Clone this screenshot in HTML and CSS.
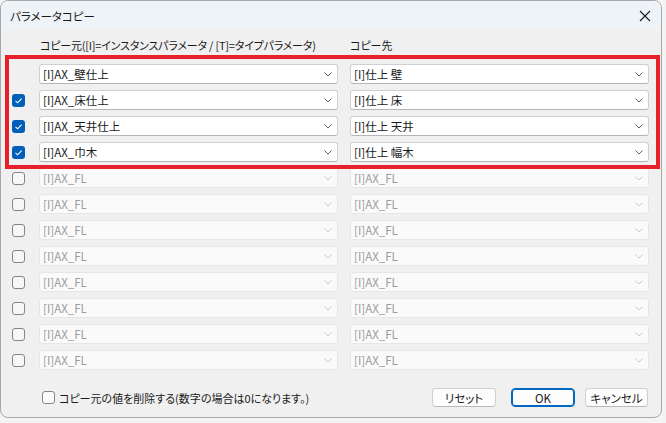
FILE: index.html
```html
<!DOCTYPE html>
<html lang="ja">
<head>
<meta charset="utf-8">
<title>パラメータコピー</title>
<link rel="stylesheet" href="styles.css">
</head>
<body>
<div class="window">
  <div class="titlebar">
    <span class="title">パラメータコピー</span>
    <svg class="close" width="12" height="12" viewBox="0 0 12 12"><path d="M1 1 L11 11 M11 1 L1 11" stroke="#1a1a1a" stroke-width="1.1" fill="none"/></svg>
  </div>
  <div class="content">
    <div class="header grid">
      <span></span>
      <span class="h-src">コピー元([I]=インスタンスパラメータ / [T]=タイプパラメータ)</span>
      <span class="h-dst">コピー先</span>
    </div>
    <div class="rows">
      <div class="row grid">
        <span></span>
        <div class="combo"><span class="val">[I]AX_壁仕上</span><svg class="chev" width="8" height="5" viewBox="0 0 8 5"><path d="M0.5 0.5 L4 4 L7.5 0.5" stroke="#606060" fill="none"/></svg></div>
        <div class="combo"><span class="val">[I]仕上 壁</span><svg class="chev" width="8" height="5" viewBox="0 0 8 5"><path d="M0.5 0.5 L4 4 L7.5 0.5" stroke="#606060" fill="none"/></svg></div>
      </div>
      <div class="row grid">
        <span class="cb checked"><svg width="13" height="13" viewBox="0 0 13 13"><path d="M3.5 6.8 L5.6 8.8 L9.6 4.6" stroke="#fff" stroke-width="1.1" fill="none"/></svg></span>
        <div class="combo"><span class="val">[I]AX_床仕上</span><svg class="chev" width="8" height="5" viewBox="0 0 8 5"><path d="M0.5 0.5 L4 4 L7.5 0.5" stroke="#606060" fill="none"/></svg></div>
        <div class="combo"><span class="val">[I]仕上 床</span><svg class="chev" width="8" height="5" viewBox="0 0 8 5"><path d="M0.5 0.5 L4 4 L7.5 0.5" stroke="#606060" fill="none"/></svg></div>
      </div>
      <div class="row grid">
        <span class="cb checked"><svg width="13" height="13" viewBox="0 0 13 13"><path d="M3.5 6.8 L5.6 8.8 L9.6 4.6" stroke="#fff" stroke-width="1.1" fill="none"/></svg></span>
        <div class="combo"><span class="val">[I]AX_天井仕上</span><svg class="chev" width="8" height="5" viewBox="0 0 8 5"><path d="M0.5 0.5 L4 4 L7.5 0.5" stroke="#606060" fill="none"/></svg></div>
        <div class="combo"><span class="val">[I]仕上 天井</span><svg class="chev" width="8" height="5" viewBox="0 0 8 5"><path d="M0.5 0.5 L4 4 L7.5 0.5" stroke="#606060" fill="none"/></svg></div>
      </div>
      <div class="row grid">
        <span class="cb checked"><svg width="13" height="13" viewBox="0 0 13 13"><path d="M3.5 6.8 L5.6 8.8 L9.6 4.6" stroke="#fff" stroke-width="1.1" fill="none"/></svg></span>
        <div class="combo"><span class="val">[I]AX_巾木</span><svg class="chev" width="8" height="5" viewBox="0 0 8 5"><path d="M0.5 0.5 L4 4 L7.5 0.5" stroke="#606060" fill="none"/></svg></div>
        <div class="combo"><span class="val">[I]仕上 幅木</span><svg class="chev" width="8" height="5" viewBox="0 0 8 5"><path d="M0.5 0.5 L4 4 L7.5 0.5" stroke="#606060" fill="none"/></svg></div>
      </div>
      <div class="row grid"><span class="cb"></span><div class="combo disabled"><span class="val">[I]AX_FL</span><svg class="chev" width="8" height="5" viewBox="0 0 8 5"><path d="M0.5 0.5 L4 4 L7.5 0.5" stroke="#c8c8c8" fill="none"/></svg></div><div class="combo disabled"><span class="val">[I]AX_FL</span><svg class="chev" width="8" height="5" viewBox="0 0 8 5"><path d="M0.5 0.5 L4 4 L7.5 0.5" stroke="#c8c8c8" fill="none"/></svg></div></div>
      <div class="row grid"><span class="cb"></span><div class="combo disabled"><span class="val">[I]AX_FL</span><svg class="chev" width="8" height="5" viewBox="0 0 8 5"><path d="M0.5 0.5 L4 4 L7.5 0.5" stroke="#c8c8c8" fill="none"/></svg></div><div class="combo disabled"><span class="val">[I]AX_FL</span><svg class="chev" width="8" height="5" viewBox="0 0 8 5"><path d="M0.5 0.5 L4 4 L7.5 0.5" stroke="#c8c8c8" fill="none"/></svg></div></div>
      <div class="row grid"><span class="cb"></span><div class="combo disabled"><span class="val">[I]AX_FL</span><svg class="chev" width="8" height="5" viewBox="0 0 8 5"><path d="M0.5 0.5 L4 4 L7.5 0.5" stroke="#c8c8c8" fill="none"/></svg></div><div class="combo disabled"><span class="val">[I]AX_FL</span><svg class="chev" width="8" height="5" viewBox="0 0 8 5"><path d="M0.5 0.5 L4 4 L7.5 0.5" stroke="#c8c8c8" fill="none"/></svg></div></div>
      <div class="row grid"><span class="cb"></span><div class="combo disabled"><span class="val">[I]AX_FL</span><svg class="chev" width="8" height="5" viewBox="0 0 8 5"><path d="M0.5 0.5 L4 4 L7.5 0.5" stroke="#c8c8c8" fill="none"/></svg></div><div class="combo disabled"><span class="val">[I]AX_FL</span><svg class="chev" width="8" height="5" viewBox="0 0 8 5"><path d="M0.5 0.5 L4 4 L7.5 0.5" stroke="#c8c8c8" fill="none"/></svg></div></div>
      <div class="row grid"><span class="cb"></span><div class="combo disabled"><span class="val">[I]AX_FL</span><svg class="chev" width="8" height="5" viewBox="0 0 8 5"><path d="M0.5 0.5 L4 4 L7.5 0.5" stroke="#c8c8c8" fill="none"/></svg></div><div class="combo disabled"><span class="val">[I]AX_FL</span><svg class="chev" width="8" height="5" viewBox="0 0 8 5"><path d="M0.5 0.5 L4 4 L7.5 0.5" stroke="#c8c8c8" fill="none"/></svg></div></div>
      <div class="row grid"><span class="cb"></span><div class="combo disabled"><span class="val">[I]AX_FL</span><svg class="chev" width="8" height="5" viewBox="0 0 8 5"><path d="M0.5 0.5 L4 4 L7.5 0.5" stroke="#c8c8c8" fill="none"/></svg></div><div class="combo disabled"><span class="val">[I]AX_FL</span><svg class="chev" width="8" height="5" viewBox="0 0 8 5"><path d="M0.5 0.5 L4 4 L7.5 0.5" stroke="#c8c8c8" fill="none"/></svg></div></div>
      <div class="row grid"><span class="cb"></span><div class="combo disabled"><span class="val">[I]AX_FL</span><svg class="chev" width="8" height="5" viewBox="0 0 8 5"><path d="M0.5 0.5 L4 4 L7.5 0.5" stroke="#c8c8c8" fill="none"/></svg></div><div class="combo disabled"><span class="val">[I]AX_FL</span><svg class="chev" width="8" height="5" viewBox="0 0 8 5"><path d="M0.5 0.5 L4 4 L7.5 0.5" stroke="#c8c8c8" fill="none"/></svg></div></div>
      <div class="row grid"><span class="cb"></span><div class="combo disabled"><span class="val">[I]AX_FL</span><svg class="chev" width="8" height="5" viewBox="0 0 8 5"><path d="M0.5 0.5 L4 4 L7.5 0.5" stroke="#c8c8c8" fill="none"/></svg></div><div class="combo disabled"><span class="val">[I]AX_FL</span><svg class="chev" width="8" height="5" viewBox="0 0 8 5"><path d="M0.5 0.5 L4 4 L7.5 0.5" stroke="#c8c8c8" fill="none"/></svg></div></div>
    </div>
    <div class="footer">
      <span class="cb"></span>
      <span class="foot-label">コピー元の値を削除する(数字の場合は0になります。)</span>
      <div class="buttons">
        <button class="btn reset">リセット</button>
        <button class="btn ok">OK</button>
        <button class="btn cancel">キャンセル</button>
      </div>
    </div>
  </div>
  <div class="highlight"></div>
</div>
</body>
</html>
```

FILE: styles.css
```css
html, body {
  margin: 0;
  padding: 0;
}
body {
  background: #f4f4f4;
  font-family: "Noto Sans CJK JP", "Noto Sans", sans-serif;
  font-size: 11.5px;
  font-feature-settings: "palt";
  color: #1a1a1a;
  width: 666px;
  height: 423px;
  overflow: hidden;
}
.window {
  position: relative;
  width: 662px;
  height: 418px;
  box-sizing: border-box;
  border: 1px solid #a8a8a8;
  border-radius: 8px;
  background: #f0f0f0;
  overflow: hidden;
}
.titlebar {
  height: 29px;
  background: #eef3f8;
  display: flex;
  align-items: center;
  justify-content: space-between;
  padding: 0 10px 0 9px;
}
.title {
  font-size: 11.5px;
  line-height: 16px;
  padding-top: 1px;
}
.close {
  display: block;
  margin-top: 1px;
}
.grid {
  display: grid;
  grid-template-columns: 26px 299px 299px;
  column-gap: 12px;
}
.header {
  height: 34px;
  padding-top: 7px;
  box-sizing: border-box;
  line-height: 16px;
  font-size: 11px;
}
.h-src {
  padding-left: 1px;
  white-space: nowrap;
  letter-spacing: -0.2px;
}
.rows {
  display: flex;
  flex-direction: column;
  gap: 6px;
}
.row {
  height: 20px;
  align-items: center;
}
.cb {
  display: block;
  width: 13px;
  height: 13px;
  box-sizing: border-box;
  border: 1px solid #858585;
  border-radius: 3px;
  background: #f7f7f7;
  margin-left: 11px;
}
.cb.checked {
  border: none;
  background: #005fb8;
}
.cb svg {
  display: block;
}
.combo {
  height: 20px;
  box-sizing: border-box;
  border: 1px solid #d0d0d0;
  border-bottom-color: #b5b5b5;
  border-radius: 3px;
  background: #ffffff;
  display: flex;
  align-items: center;
  justify-content: space-between;
  padding: 0 5px 0 3px;
}
.combo .val {
  line-height: 16px;
  white-space: nowrap;
}
.combo.disabled {
  background: #fafafa;
  border-color: #e6e6e6;
  color: #9c9c9c;
}
.chev {
  display: block;
}
.footer {
  display: flex;
  align-items: center;
  margin-top: 18px;
  height: 19px;
  padding-right: 13px;
}
.footer .cb {
  margin-left: 41px;
  background: #fbfbfb;
}
.foot-label {
  margin-left: 4px;
  line-height: 16px;
  white-space: nowrap;
  font-size: 11px;
}
.buttons {
  margin-left: auto;
  display: flex;
  gap: 10px;
}
.btn {
  font-family: inherit;
  font-size: 11.5px;
  font-feature-settings: "palt";
  color: #1a1a1a;
  height: 19px;
  width: 64px;
  padding: 0;
  box-sizing: border-box;
  background: #fdfdfd;
  border: 1px solid #d0d0d0;
  border-bottom-color: #b8b8b8;
  border-radius: 4px;
  line-height: 16px;
}
.btn.ok {
  margin-left: 5px;
  border: 1px solid #0067c0;
  box-shadow: inset 0 0 0 1px #0067c0;
}
.btn.cancel {
  width: 63px;
}
.highlight {
  position: absolute;
  left: 4px;
  top: 54px;
  width: 655px;
  height: 114px;
  box-sizing: border-box;
  border: 4px solid #e8202a;
  pointer-events: none;
}
```
